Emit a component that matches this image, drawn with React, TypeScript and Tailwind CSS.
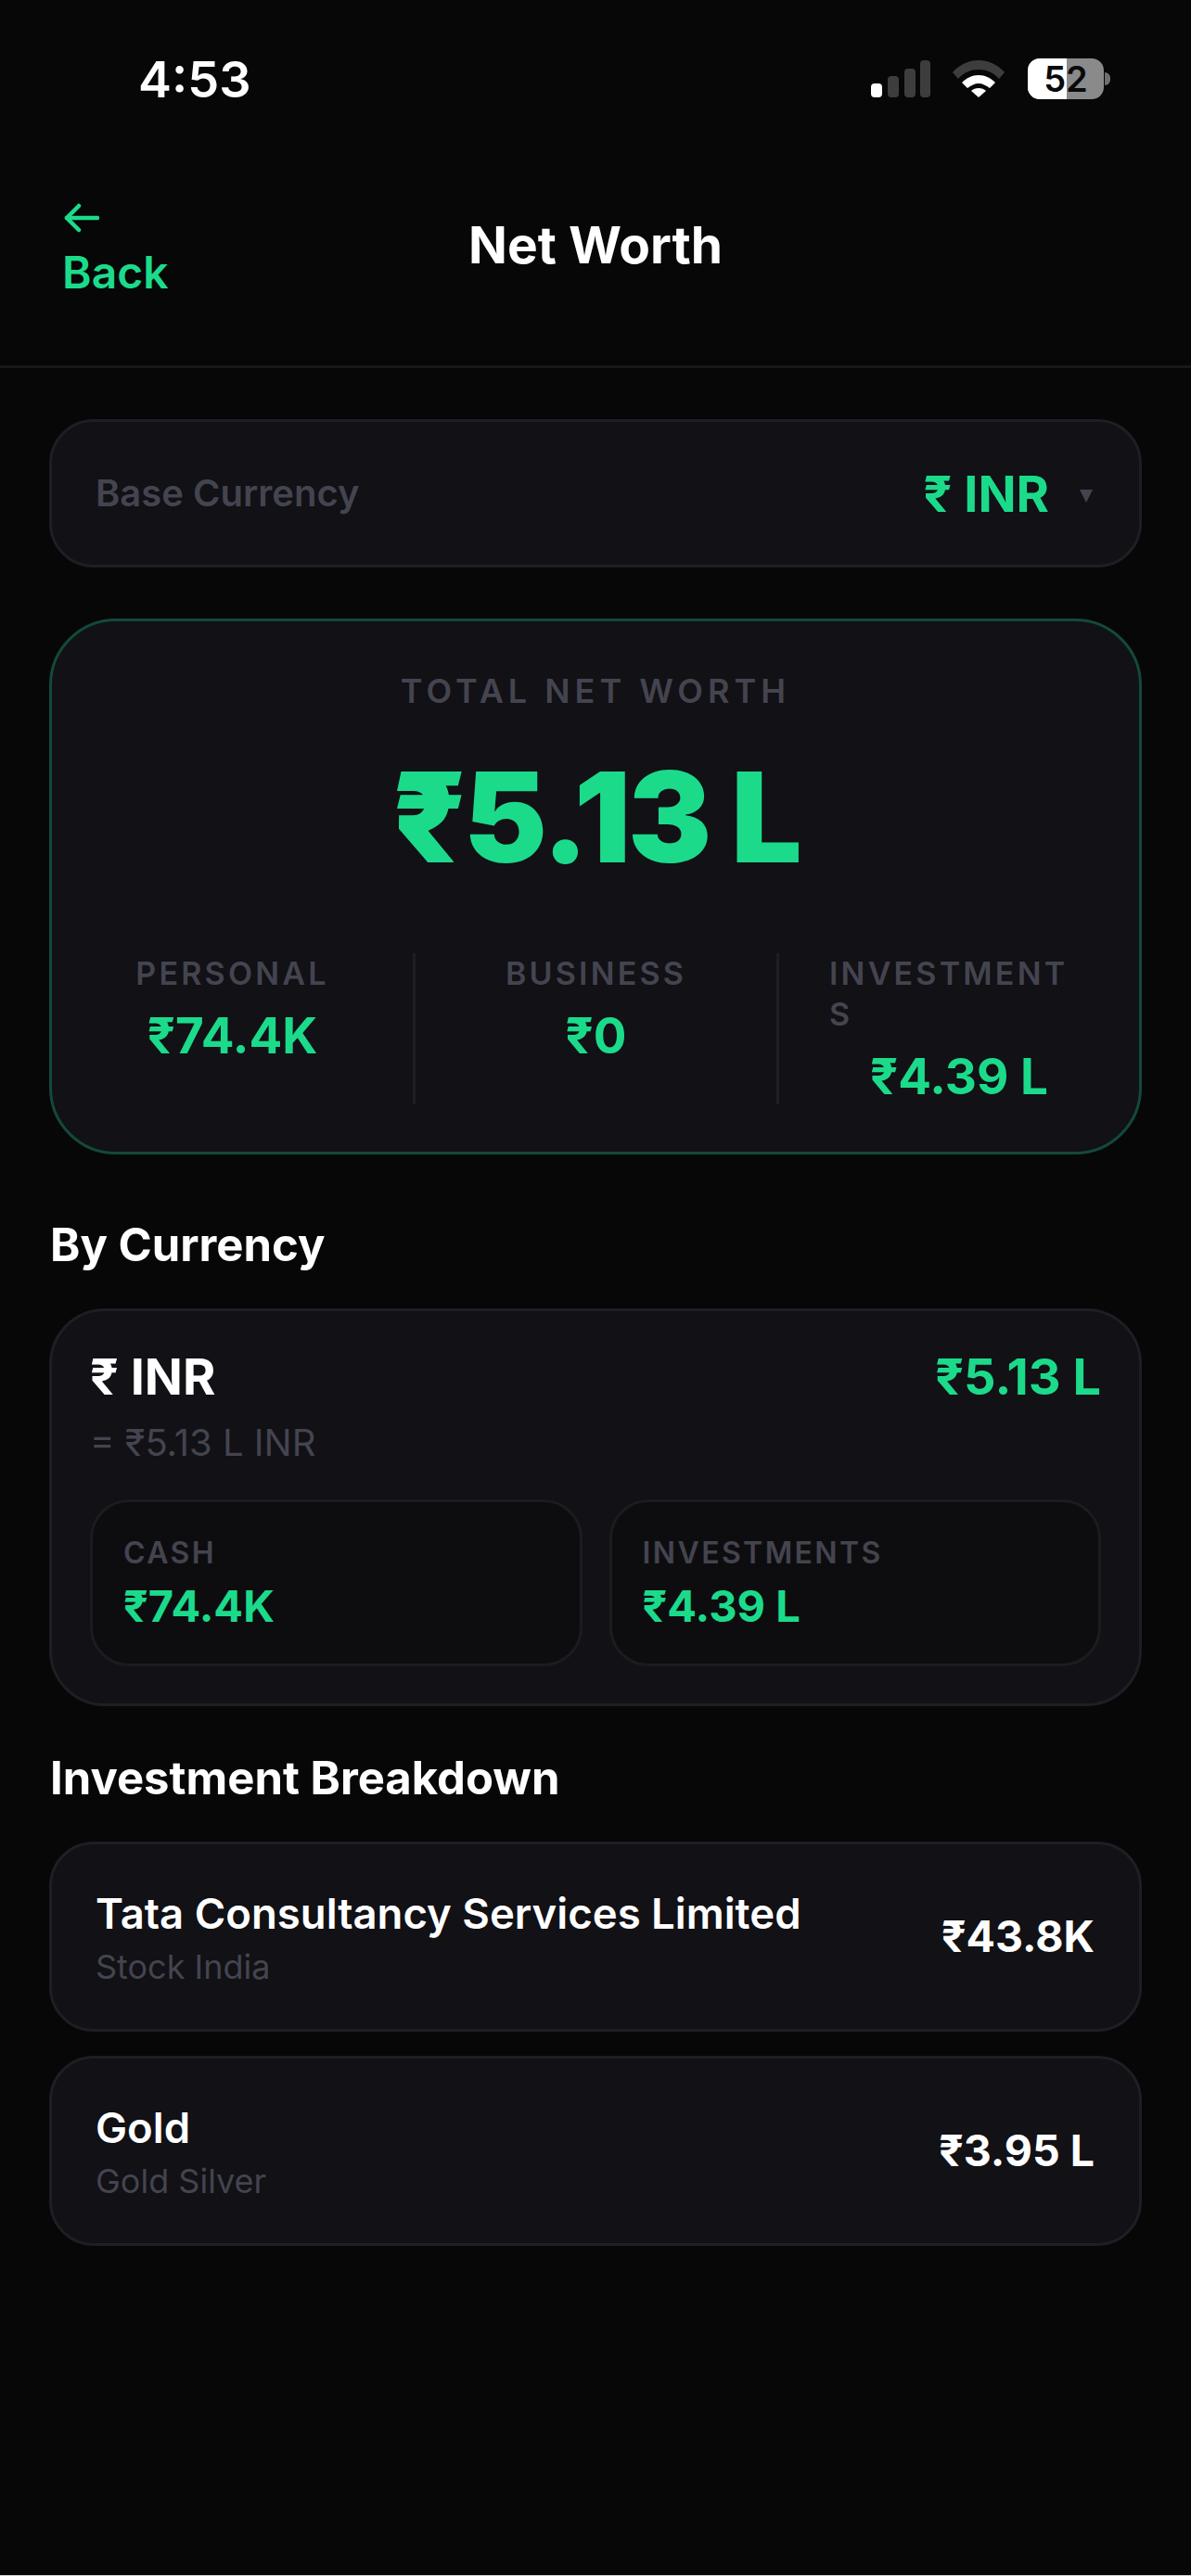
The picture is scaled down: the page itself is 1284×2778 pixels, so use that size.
const green = "text-[#1bdb8b]";

function StatusIcons() {
  return (
    <div className="flex items-center">
      <svg width="64" height="40" viewBox="0 0 64 40" className="mr-[24px]">
        <rect x="0" y="25" width="12" height="15" rx="4" fill="#fff" />
        <rect x="18" y="17" width="12" height="23" rx="4" fill="#3d3d3d" />
        <rect x="36" y="9" width="12" height="31" rx="4" fill="#3d3d3d" />
        <rect x="53" y="0" width="11" height="40" rx="4" fill="#3d3d3d" />
      </svg>
      <svg width="56" height="40" viewBox="0 0 56 40" className="mr-[25px]">
        <path d="M0 13 C8 4 18 0 28 0 C38 0 48 4 56 13 L50 20 C44 13 36 10 28 10 C20 10 12 13 6 20 Z" fill="#3d3d3d" />
        <path d="M10 24 C15 19 21 16 28 16 C35 16 41 19 46 24 L40 30 C36 27 32 25 28 25 C24 25 20 27 16 30 Z" fill="#fff" />
        <path d="M20 33 C22 31 25 30 28 30 C31 30 34 31 36 33 L28 40 Z" fill="#fff" />
      </svg>
      <div className="relative h-[44px] w-[82px] overflow-hidden rounded-[13px] bg-[#8a8a8a]">
        <div className="h-full w-[42px] bg-white" />
        <span className="absolute inset-0 flex items-center justify-center text-[38px] font-semibold text-[#0a0a0a]">52</span>
      </div>
      <div className="ml-[1px] h-[14px] w-[6px] rounded-r-full bg-[#6f6f6f]" />
    </div>
  );
}

function Stat({ label, value, wrap }: { label: string; value: string; wrap?: boolean }) {
  return (
    <div className="flex flex-col items-center px-[54px] border-l-[3px] border-[#1e1e25] first:border-l-0">
      <span className={wrap ? "w-[270px] self-start break-all text-[34px] leading-[44px] font-semibold tracking-[3.2px] text-[#44444f]" : "text-[34px] leading-[44px] font-semibold tracking-[3.2px] text-[#44444f]"}>
        {label}
      </span>
      <span className={`mt-[15px] text-[53px] leading-[60px] font-bold ${green}`}>{value}</span>
    </div>
  );
}

function HoldingCard({ label, value }: { label: string; value: string }) {
  return (
    <div className="flex-1 h-[180px] rounded-[42px] border-[3px] border-[#1b1b20] bg-[#0d0d10] pl-[33px] pt-[37px]">
      <div className="text-[32px] leading-[36px] font-semibold tracking-[2.4px] text-[#44444f]">{label}</div>
      <div className={`mt-[12px] text-[47px] leading-[54px] font-bold ${green}`}>{value}</div>
    </div>
  );
}

function InvestmentRow({ name, kind, value }: { name: string; kind: string; value: string }) {
  return (
    <div className="flex h-[205px] items-center justify-between rounded-[48px] border-[3px] border-[#1e1e25] bg-[#111116] pl-[47px] pr-[48px]">
      <div className="self-start pt-[48px]">
        <div className="text-[45.5px] leading-[54px] font-semibold text-white">{name}</div>
        <div className="mt-[8px] text-[36px] leading-[44px] text-[#44444f]">{kind}</div>
      </div>
      <div className="text-[46.5px] font-bold text-white">{value}</div>
    </div>
  );
}

export default function App() {
  return (
    <div className="min-h-[2778px] border-b border-[#d8d8d8] bg-[#070707] font-['Inter',sans-serif]">
      <div className="flex h-[170px] items-start justify-between pl-[149px] pr-[87px] pt-[54px]">
        <span className="text-[54px] leading-[64px] font-semibold text-white">4:53</span>
        <div className="pt-[9px]">
          <StatusIcons />
        </div>
      </div>

      <div className="relative flex h-[227px] items-start border-b-[3px] border-[#17171a] pl-[67px] pt-[49px]">
        <div className={green}>
          <svg width="40" height="32" viewBox="0 0 40 32" fill="none" stroke="currentColor" strokeWidth="4.5" strokeLinecap="round" strokeLinejoin="round">
            <path d="M38 16 H5" />
            <path d="M18 3 L5 16 L18 29" />
          </svg>
          <div className="mt-[14px] text-[48px] leading-[58px] font-semibold">Back</div>
        </div>
        <div className="absolute inset-x-0 top-[62px] text-center text-[55px] leading-[64px] font-bold text-white">Net Worth</div>
      </div>

      <div className="px-[53px] pt-[55px]">
        <div className="flex h-[160px] items-center justify-between rounded-[48px] border-[3px] border-[#1e1e25] bg-[#111116] pl-[47px] pr-[50px]">
          <span className="text-[40px] font-semibold text-[#44444f]">Base Currency</span>
          <div className="flex items-center">
            <span className={`text-[54px] font-bold ${green}`}>₹ INR</span>
            <svg width="14" height="14" viewBox="0 0 14 14" className="ml-[33px] mt-[6px]">
              <path d="M0 0 H14 L7 14 Z" fill="#44444f" />
            </svg>
          </div>
        </div>

        <div className="mt-[55px] h-[578px] rounded-[72px] border-[3px] border-[#14493a] bg-[#111116] pt-[53px]">
          <div className="text-center text-[36px] leading-[44px] font-semibold tracking-[5px] text-[#44444f]">TOTAL NET WORTH</div>
          <div className={`mt-[39px] text-center text-[135px] leading-[150px] font-black tracking-[-3px] ${green}`}>₹5.13 L</div>
          <div className="mt-[72px] grid h-[162px] grid-cols-[389px_392px_1fr]">
            <Stat label="PERSONAL" value="₹74.4K" />
            <Stat label="BUSINESS" value="₹0" />
            <Stat label="INVESTMENTS" value="₹4.39 L" wrap />
          </div>
        </div>

        <h2 className="mt-[69px] pl-[1px] text-[49px] leading-[58px] font-bold text-white">By Currency</h2>

        <div className="mt-[39px] h-[429px] rounded-[60px] border-[3px] border-[#1e1e25] bg-[#111116] px-[41px] pt-[42px]">
          <div className="flex items-start justify-between">
            <span className="text-[54px] leading-[58px] font-bold text-white">₹ INR</span>
            <span className={`text-[54px] leading-[58px] font-bold ${green}`}>₹5.13 L</span>
          </div>
          <div className="mt-[15px] text-[40px] leading-[54px] text-[#44444f]">= ₹5.13 L INR</div>
          <div className="mt-[34px] flex gap-[29px]">
            <HoldingCard label="CASH" value="₹74.4K" />
            <HoldingCard label="INVESTMENTS" value="₹4.39 L" />
          </div>
        </div>

        <h2 className="mt-[49px] pl-[1px] text-[49px] leading-[58px] font-bold text-white">Investment Breakdown</h2>

        <div className="mt-[39px] flex flex-col gap-[26px]">
          <InvestmentRow name="Tata Consultancy Services Limited" kind="Stock India" value="₹43.8K" />
          <InvestmentRow name="Gold" kind="Gold Silver" value="₹3.95 L" />
        </div>
      </div>
    </div>
  );
}
